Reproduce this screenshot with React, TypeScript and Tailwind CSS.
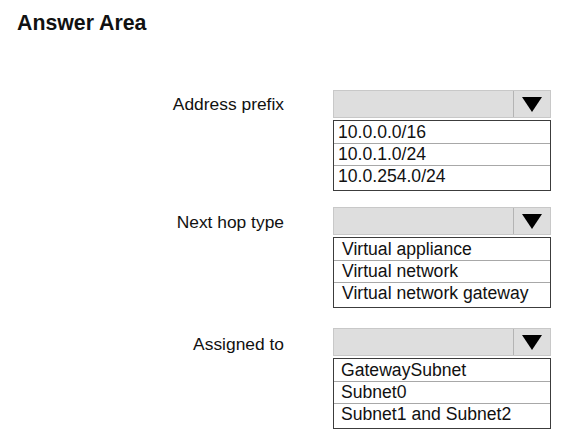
const fields = [
  {
    label: 'Address prefix',
    labelPad: 'pt-[3px]',
    gap: 'mt-[55px]',
    indent: 'pl-[4px]',
    options: ['10.0.0.0/16', '10.0.1.0/24', '10.0.254.0/24'],
  },
  {
    label: 'Next hop type',
    labelPad: 'pt-[4px]',
    gap: 'mt-[16px]',
    indent: 'pl-[8px]',
    options: ['Virtual appliance', 'Virtual network', 'Virtual network gateway'],
  },
  {
    label: 'Assigned to',
    labelPad: 'pt-[5px]',
    gap: 'mt-[20px]',
    indent: 'pl-[7px]',
    options: ['GatewaySubnet', 'Subnet0', 'Subnet1 and Subnet2'],
  },
];

function Dropdown({ options, indent }: { options: string[]; indent: string }) {
  return (
    <div className="w-[218px]">
      {/* closed select */}
      <div className="flex h-[28px] border border-[#c8c8c8] bg-[#dedede]">
        <div className="flex-1 border-r border-[#b4b4b4]" />
        <div className="flex w-[36px] items-center justify-center">
          <svg width="20" height="15" viewBox="0 0 20 15">
            <polygon points="0,0 20,0 10,15" fill="#000" />
          </svg>
        </div>
      </div>

      {/* option list */}
      <div className="mt-[2px] border border-[#3c3c3c] bg-white pb-[3px]">
        {options.map((opt, i) => (
          <div
            key={opt}
            className={`${indent} text-[17.6px] leading-[21px] text-[#111] ${
              i > 0 ? 'border-t border-[#a8a8a8]' : 'pt-[1px]'
            }`}
          >
            {opt}
          </div>
        ))}
      </div>
    </div>
  );
}

export default function App() {
  return (
    <div
      className="h-[448px] w-[569px] bg-white pt-[11px]"
      style={{ fontFamily: '"Liberation Sans", Arial, sans-serif' }}
    >
      <h1 className="pl-[17px] text-[21.3px] font-bold leading-[24px] text-[#111]">Answer Area</h1>

      {fields.map((f) => (
        <div key={f.label} className={`flex items-start ${f.gap}`}>
          <div className={`w-[284px] text-right text-[17.4px] leading-[22px] text-[#111] ${f.labelPad}`}>
            {f.label}
          </div>
          <div className="ml-[49px]">
            <Dropdown options={f.options} indent={f.indent} />
          </div>
        </div>
      ))}
    </div>
  );
}
